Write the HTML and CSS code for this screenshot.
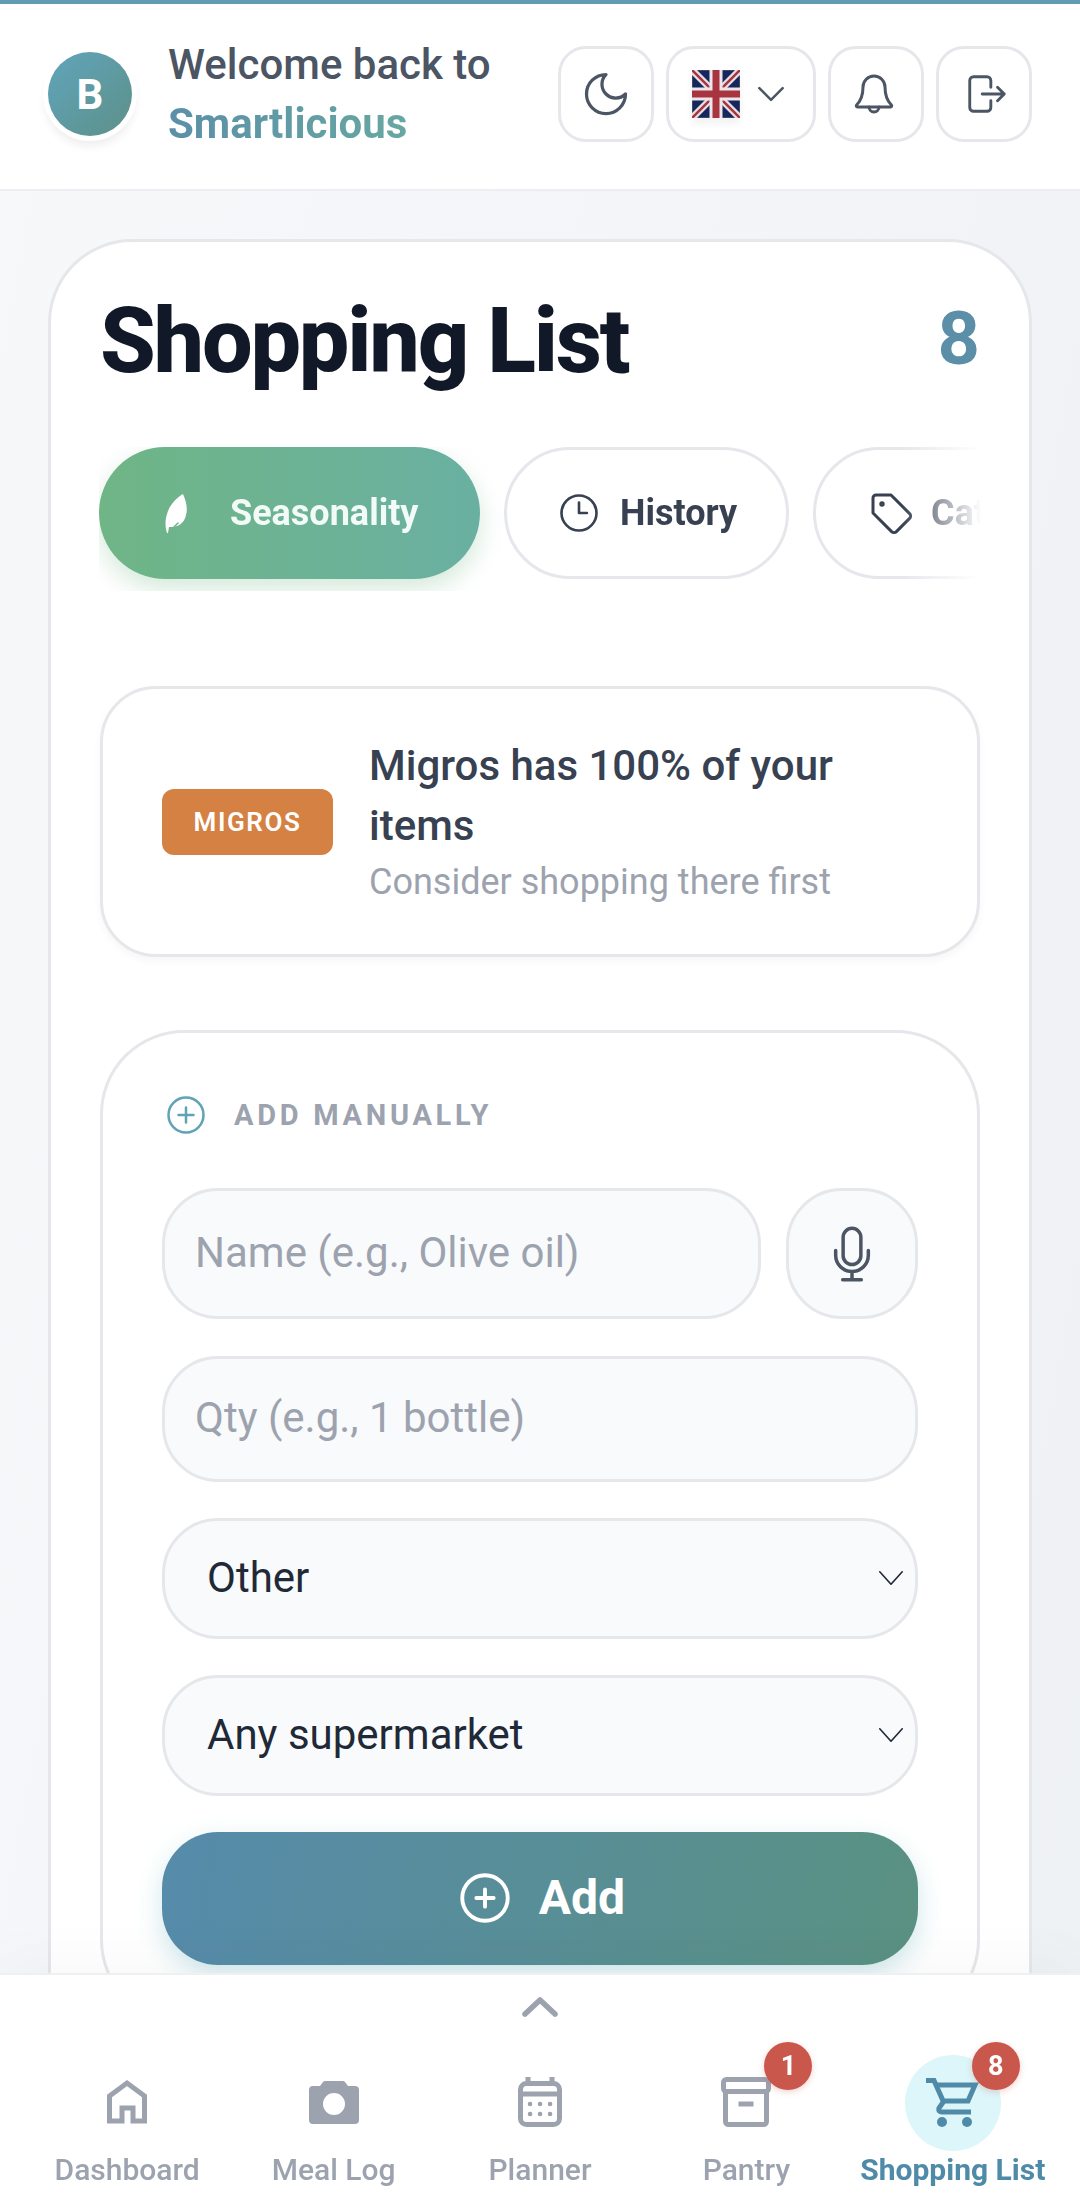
FILE: index.html

```html
<!DOCTYPE html>
<html lang="en">
<head>
  <meta charset="UTF-8" />
  <meta name="viewport" content="width=device-width, initial-scale=1.0" />
  <title>Smartlicious - Shopping List</title>
  <link rel="stylesheet" href="styles.css">
</head>
<body>
  <header class="topbar">
    <div class="avatar">B</div>
    <div class="welcome">
      <div class="welcome-line">Welcome back to</div>
      <div class="brand">Smartlicious</div>
    </div>
    <div class="top-actions">
      <button class="icon-btn">
        <svg class="ico-52" viewBox="0 0 24 24"><path d="M12 3a6 6 0 0 0 9 9 9 9 0 1 1-9-9Z"/></svg>
      </button>
      <button class="icon-btn lang-btn">
        <svg class="flag" viewBox="0 0 48 48">
          <rect width="48" height="48" fill="#16265f"/>
          <path d="M0 0 48 48M48 0 0 48" stroke="#e8dfe2" stroke-width="7"/>
          <path d="M0 0 48 48M48 0 0 48" stroke="#a8343f" stroke-width="2.500"/>
          <path d="M24 0V48M0 24H48" stroke="#ece6e8" stroke-width="13"/>
          <path d="M24 0V48M0 24H48" stroke="#a8343f" stroke-width="7"/>
        </svg>
        <svg class="ico-40" viewBox="0 0 24 24"><path d="m5 8.500 7 7 7-7"/></svg>
      </button>
      <button class="icon-btn">
        <svg class="ico-48 bell-ico" viewBox="0 0 24 24"><path d="M6.500 8.500a5.500 5.500 0 0 1 11 0c0 4.500 1 6.800 3.200 9a.6.6 0 0 1-.4 1H3.700a.6.6 0 0 1-.4-1c2.200-2.200 3.200-4.500 3.200-9Z"/><path d="M9.500 18.500a2.500 2.500 0 0 0 5 0"/></svg>
      </button>
      <button class="icon-btn">
        <svg class="ico-46 out-ico" viewBox="0 0 24 24"><path d="M14 8.500V5a2 2 0 0 0-2-2H5a2 2 0 0 0-2 2v14a2 2 0 0 0 2 2h7a2 2 0 0 0 2-2v-3.500"/><path d="M9.500 12H21M17.500 8.500 21 12l-3.500 3.500"/></svg>
      </button>
    </div>
  </header>

  <main class="page">
    <section class="card">
      <div class="title-row">
        <h1>Shopping List</h1>
        <span class="count">8</span>
      </div>

      <div class="tabs">
        <button class="tab tab-active">
          <svg class="leaf" viewBox="0 0 24 40"><path d="M18 1c3 7 5 14 3 21-1 5-4 9-9 11-3 1-6 1-8 1l-1 6H2c-2-6-2-13 0-19C4 13 11 5 18 1Z"/><path class="leaf-vein" d="M5 38l8-8"/></svg>
          Seasonality
        </button>
        <button class="tab">
          <svg class="ico-42" viewBox="0 0 24 24"><circle cx="12" cy="12" r="10"/><path d="M12 6v6h4.500"/></svg>
          History
        </button>
        <button class="tab tab-tag">
          <svg class="ico-48" viewBox="0 0 24 24"><path d="M3 4.500A1.500 1.500 0 0 1 4.500 3H12l9.300 9.300a1.700 1.700 0 0 1 0 2.400l-6.600 6.600a1.700 1.700 0 0 1-2.400 0L3 12Z"/><circle cx="7.500" cy="7.500" r=".6"/></svg>
          Categories
        </button>
      </div>

      <div class="store-tip">
        <span class="store-badge">MIGROS</span>
        <div class="tip-text">
          <div class="tip-title">Migros has 100% of your items</div>
          <div class="tip-sub">Consider shopping there first</div>
        </div>
      </div>

      <div class="add-card">
        <div class="add-head">
          <svg class="ico-40 teal" viewBox="0 0 24 24"><circle cx="12" cy="12" r="10.500"/><path d="M12 7.500v9M7.500 12h9"/></svg>
          <span>ADD MANUALLY</span>
        </div>
        <div class="name-row">
          <input class="field name-field" type="text" placeholder="Name (e.g., Olive oil)">
          <button class="mic-btn">
            <svg class="ico-56" viewBox="0 0 24 24"><rect x="8.200" y="1" width="7.600" height="15.500" rx="3.800"/><path d="M5 10.500v2a7 7 0 0 0 14 0v-2M12 19.500V23M8 23h8"/></svg>
          </button>
        </div>
        <input class="field qty-field" type="text" placeholder="Qty (e.g., 1 bottle)">
        <div class="select-wrap">
          <select class="field select-field"><option>Other</option></select>
          <svg class="select-arrow" viewBox="0 0 24 24"><path d="m3 7 9 10 9-10"/></svg>
        </div>
        <div class="select-wrap">
          <select class="field select-field"><option>Any supermarket</option></select>
          <svg class="select-arrow" viewBox="0 0 24 24"><path d="m3 7 9 10 9-10"/></svg>
        </div>
        <button class="add-btn">
          <svg class="ico-52" viewBox="0 0 24 24"><circle cx="12" cy="12" r="10.500"/><path d="M12 8v8M8 12h8"/></svg>
          Add
        </button>
      </div>
    </section>
  </main>

  <nav class="bottom-nav">
    <svg class="nav-handle" viewBox="0 0 40 24"><path d="M5 20 20 6l15 14"/></svg>
    <div class="nav-items">
      <div class="nav-item">
        <div class="nav-icon">
          <svg viewBox="0 0 48 48"><path d="M6.500 42V17L24 4l17.500 13v25H30V29H19v13Z"/></svg>
        </div>
        <span>Dashboard</span>
      </div>
      <div class="nav-item">
        <div class="nav-icon">
          <svg class="solid" viewBox="0 0 52 48"><path fill-rule="evenodd" d="M5 7h7l3-4a3 3 0 0 1 2-1h18a3 3 0 0 1 2 1l3 4h7a4 4 0 0 1 4 4v30a4 4 0 0 1-4 4H5a4 4 0 0 1-4-4V11a4 4 0 0 1 4-4Zm21 7a11 11 0 1 0 0 22 11 11 0 0 0 0-22Z"/></svg>
        </div>
        <span>Meal Log</span>
      </div>
      <div class="nav-item">
        <div class="nav-icon">
          <svg viewBox="0 0 48 48"><rect x="4.500" y="4.500" width="39" height="41" rx="6"/><path d="M4.500 15h39M12 -2v6M36 -2v6"/><path class="dots" d="M14 25h.1M24 25h.1M34 25h.1M14 35h.1M24 35h.1M34 35h.1"/></svg>
        </div>
        <span>Planner</span>
      </div>
      <div class="nav-item">
        <div class="nav-icon">
          <svg viewBox="0 0 48 48"><rect x="1.500" y=".5" width="45" height="12" rx="3"/><path d="M3.500 13v29.500a3 3 0 0 0 3 3h35a3 3 0 0 0 3-3V13M16.500 25h15"/></svg>
          <b class="nav-badge">1</b>
        </div>
        <span>Pantry</span>
      </div>
      <div class="nav-item nav-active">
        <div class="nav-icon">
          <svg viewBox="0 0 48 48"><path d="M-3 1.500H5L15 24"/><path d="M7 6H46L39 22H15L10 29Q9 33 13 33H42"/><circle class="wheel" cx="13" cy="43" r="5"/><circle class="wheel" cx="38" cy="43" r="5"/></svg>
          <b class="nav-badge">8</b>
        </div>
        <span>Shopping List</span>
      </div>
    </div>
  </nav>
</body>
</html>
```

FILE: styles.css

```css
* { box-sizing: border-box; }
html, body { margin: 0; height: 2204px; overflow: hidden; }
body {
  font-family: Roboto, "Liberation Sans", sans-serif;
  background: linear-gradient(100deg, #f7f8fa 0%, #f3f4f7 60%, #eef1f4 100%);
  color: #111827;
}
button { font-family: inherit; cursor: pointer; }
svg { fill: none; stroke: currentColor; stroke-width: 1.5; stroke-linecap: round; stroke-linejoin: round; flex: none; overflow: visible; }
.ico-40 { width: 40px; height: 40px; }
.ico-42 { width: 42px; height: 42px; }
.ico-46 { width: 46px; height: 46px; }
.ico-48 { width: 48px; height: 48px; }
.ico-52 { width: 52px; height: 52px; }
.ico-56 { width: 56px; height: 56px; }

/* header */
.topbar {
  height: 191px;
  display: flex;
  align-items: center;
  padding: 0 48px 5px;
  background: #fff;
  border-top: 4px solid #5f9cb2;
  border-bottom: 2px solid #eceef1;
}
.avatar {
  width: 84px;
  height: 84px;
  border-radius: 50%;
  flex: none;
  display: flex;
  align-items: center;
  justify-content: center;
  color: #fff;
  font-size: 42px;
  font-weight: 700;
  background: linear-gradient(135deg, #60a5bc, #5d9088);
  box-shadow: 0 0 0 5px #fff, 0 7px 10px 3px rgba(0,0,0,.07);
}
.welcome { margin-left: 36px; }
.welcome-line { font-size: 42px; font-weight: 500; line-height: 59px; color: #4b5563; }
.brand {
  font-size: 42px;
  font-weight: 700;
  line-height: 59px;
  background: linear-gradient(90deg, #5b8fa8, #6bb09f);
  -webkit-background-clip: text;
  background-clip: text;
  color: transparent;
}
.top-actions { margin-left: auto; display: flex; gap: 12px; }
.icon-btn {
  width: 96px;
  height: 96px;
  padding: 0;
  display: flex;
  align-items: center;
  justify-content: center;
  background: #fff;
  border: 3px solid #e5e7eb;
  border-radius: 28px;
  color: #4b5563;
}
.lang-btn { width: 150px; gap: 11px; }
.flag { width: 48px; height: 48px; stroke-linecap: butt; overflow: hidden; box-shadow: 0 5px 8px rgba(0,0,0,.06); }
.bell-ico { margin-right: 4px; }
.out-ico { margin-left: 6px; }

/* main card */
.page { padding: 48px 48px 0; }
.card {
  height: 1900px;
  padding: 46px 49px 0;
  background: #fff;
  border: 3px solid #e5e7eb;
  border-radius: 84px;
}
.title-row { display: flex; align-items: center; justify-content: space-between; height: 104px; }
h1 { margin: 4px 0 0; font-size: 90px; font-weight: 800; letter-spacing: -2.250px; line-height: 104px; color: #111827; }
.count { font-size: 74px; font-weight: 700; color: #5b8fa8; margin-bottom: 4px; }

.tabs {
  display: flex;
  gap: 24px;
  margin: 55px -1px 0;
  padding-bottom: 12px;
  overflow: hidden;
  -webkit-mask-image: linear-gradient(90deg, #000 91%, transparent 100%);
  mask-image: linear-gradient(90deg, #000 91%, transparent 100%);
}
.tab {
  flex: none;
  height: 132px;
  padding: 0 49px 0 51px;
  display: flex;
  align-items: center;
  gap: 20px;
  background: #fff;
  border: 3px solid #e5e7eb;
  border-radius: 66px;
  font-size: 36px;
  font-weight: 700;
  color: #374151;
}
.tab-active {
  width: 381px;
  gap: 41px;
  padding: 0 0 0 66px;
  border: none;
  color: #f2fbf7;
  background: linear-gradient(90deg, #6fb586, #6ab0a2);
  box-shadow: 0 10px 24px rgba(111,181,134,.3);
}
.tab-tag { gap: 16px; }
.leaf { width: 24px; height: 40px; fill: #fff; stroke: none; }
.leaf-vein { fill: none; stroke: #6fb586; stroke-width: 1.500; }

/* store tip */
.store-tip {
  margin: 95px 0 0;
  height: 271px;
  padding: 0 59px;
  display: flex;
  align-items: center;
  gap: 36px;
  background: #fff;
  border: 3px solid #e5e7eb;
  border-radius: 56px;
  box-shadow: 0 4px 8px rgba(0,0,0,.04);
}
.store-badge {
  flex: none;
  width: 171px;
  height: 66px;
  display: flex;
  align-items: center;
  justify-content: center;
  background: #d58144;
  border-radius: 12px;
  color: #fff;
  font-size: 26px;
  font-weight: 600;
  letter-spacing: 1.600px;
}
.tip-text { padding-top: 1px; }
.tip-title { font-size: 42px; font-weight: 500; line-height: 60px; color: #374151; }
.tip-sub { font-size: 36px; line-height: 52px; color: #9ca3af; }

/* add form */
.add-card {
  margin-top: 73px;
  padding: 62px 59px 56px;
  background: #fff;
  border: 3px solid #e5e7eb;
  border-radius: 84px;
}
.add-head {
  display: flex;
  align-items: center;
  gap: 28px;
  padding-left: 4px;
  font-size: 29px;
  font-weight: 700;
  letter-spacing: 3.700px;
  color: #9ca3af;
}
.teal { color: #5fa3b5; }
.name-row { display: flex; gap: 25px; margin-top: 53px; }
.field {
  display: block;
  width: 100%;
  background: #f9fafb;
  border: 3px solid #e5e7eb;
  border-radius: 56px;
  font-family: inherit;
  font-size: 42px;
  color: #1f2937;
  outline: none;
}
.field::placeholder { color: #9ca3af; opacity: 1; }
.name-field { flex: 1; min-width: 0; height: 131px; padding: 0 30px 2px; }
.mic-btn {
  flex: none;
  width: 132px;
  height: 131px;
  display: flex;
  align-items: center;
  justify-content: center;
  padding: 0;
  background: #f9fafb;
  border: 3px solid #e5e7eb;
  border-radius: 56px;
  color: #4b5563;
}
.qty-field { height: 126px; margin-top: 37px; padding: 0 30px 3px; }
.select-wrap { position: relative; margin-top: 36px; }
.select-field { height: 121px; padding: 0 42px 2px; appearance: none; -webkit-appearance: none; }
.select-arrow { position: absolute; right: 12px; top: 45px; width: 30px; height: 30px; stroke-width: 1.300; color: #1f2937; }
.add-btn {
  width: 100%;
  height: 133px;
  margin-top: 36px;
  padding: 0 0 2px 4px;
  display: flex;
  align-items: center;
  justify-content: center;
  gap: 28px;
  border: none;
  border-radius: 56px;
  color: #fff;
  font-size: 48px;
  font-weight: 700;
  background: linear-gradient(100deg, #568bab, #5a9182);
  box-shadow: 0 10px 26px rgba(96,175,190,.3);
}
.add-btn svg { stroke-width: 1.800; }

/* bottom nav */
.bottom-nav {
  position: fixed;
  left: 0;
  right: 0;
  bottom: 0;
  height: 231px;
  background: #fff;
  border-top: 2px solid #eef0f2;
  box-shadow: 0 -20px 50px rgba(0,0,0,.025);
}
.nav-handle { display: block; width: 40px; height: 24px; margin: 19px auto 0; color: #9ca3af; stroke-width: 5.500; }
.nav-items { display: grid; grid-template-columns: repeat(5, 1fr); padding: 0 24px; margin-top: 37px; }
.nav-item {
  display: flex;
  flex-direction: column;
  align-items: center;
  font-size: 30px;
  font-weight: 500;
  line-height: 35px;
  color: #9ca3af;
  white-space: nowrap;
}
.nav-icon {
  position: relative;
  width: 96px;
  height: 96px;
  display: flex;
  align-items: center;
  justify-content: center;
  border-radius: 50%;
  margin-bottom: 1px;
}
.nav-icon svg { width: 48px; height: 48px; stroke-width: 5; stroke-linecap: butt; stroke-linejoin: miter; }
.nav-icon svg.solid { width: 52px; fill: #9ca3af; stroke: none; }
.nav-icon .dots { stroke-width: 4.500; stroke-linecap: round; }
.nav-icon .wheel { fill: currentColor; stroke: none; }
.nav-badge {
  position: absolute;
  top: -13px;
  right: -18px;
  width: 48px;
  height: 48px;
  display: flex;
  align-items: center;
  justify-content: center;
  border-radius: 50%;
  background: #c9574c;
  color: #fff;
  font-size: 27px;
  font-weight: 700;
  box-shadow: 0 2px 6px rgba(201,83,74,.25);
}
.nav-active { color: #4f8ba8; font-weight: 700; }
.nav-active .nav-icon { background: #dcf6f9; }
.nav-active .nav-badge { right: -19px; }
```
